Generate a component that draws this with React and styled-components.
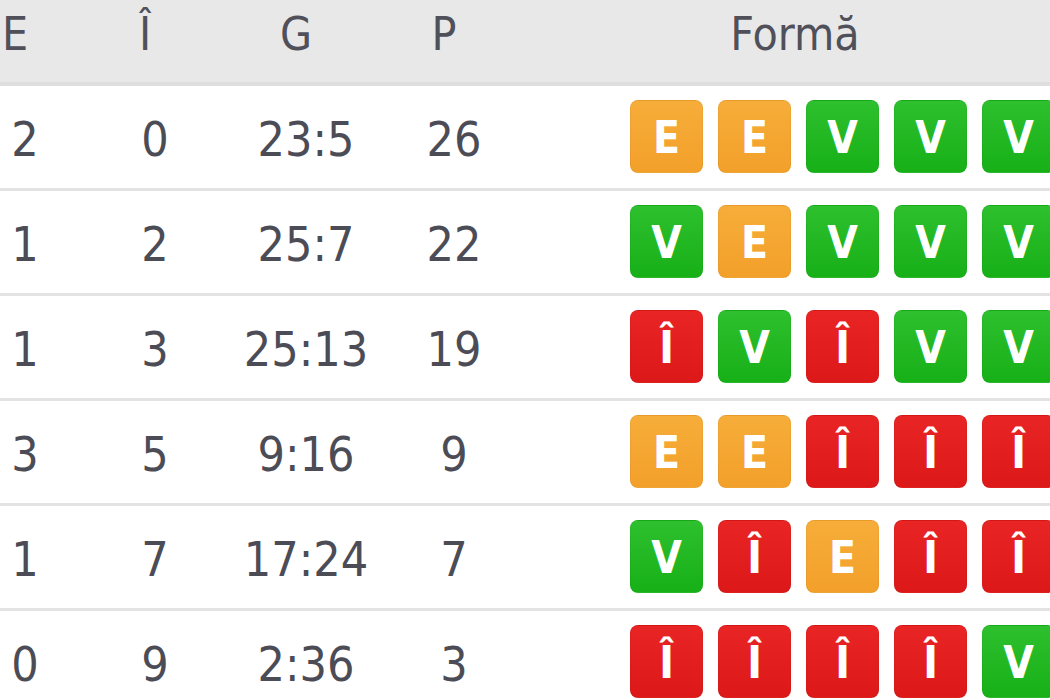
import React from "react";
import styled, { createGlobalStyle } from "styled-components";

const Global = createGlobalStyle`
  html, body { margin: 0; padding: 0; background: #fff; overflow: hidden; }
  body { font-family: "DejaVu Sans Condensed", "DejaVu Sans", Verdana, sans-serif; font-stretch: condensed; }
`;

const COLS = "90px 170px 132px 164px 538px";

const Table = styled.div`
  margin-left: -20px;
  width: 1094px;
  color: #4c4c56;
`;

const HeaderRow = styled.div`
  display: grid;
  grid-template-columns: ${COLS};
  height: 82px;
  background: #e8e8e8;
  border-bottom: 4px solid #dedede;
  box-sizing: content-box;
`;

const HeadCell = styled.div`
  display: flex;
  align-items: center;
  justify-content: center;
  padding-right: 20px;
  padding-bottom: 14px;
  font-size: 46px;
  color: #50505a;
`;

const Row = styled.div`
  display: grid;
  grid-template-columns: ${COLS};
  height: 102px;
  border-bottom: 3px solid #e3e3e3;
`;

const Cell = styled.div`
  display: flex;
  align-items: center;
  justify-content: center;
  font-size: 48px;
  padding-top: 4px;
`;

const FormCell = styled.div`
  display: flex;
  align-items: center;
  gap: 15px;
  padding-left: 94px;
  padding-bottom: 2px;
`;

const palette = {
  E: ["#f7ad3a", "#f2a02a"],
  V: ["#2ec02e", "#17b017"],
  "Î": ["#e82424", "#dc1818"],
};

const Badge = styled.div`
  width: 73px;
  height: 73px;
  flex: none;
  border-radius: 8px;
  box-sizing: border-box;
  border: 1px solid rgba(0, 0, 0, 0.04);
  background: linear-gradient(${(p) => palette[p.$r][0]}, ${(p) => palette[p.$r][1]});
  color: #fff;
  font-weight: bold;
  font-size: 44px;
  display: flex;
  align-items: center;
  justify-content: center;
  padding-top: 2px;
`;

const rows = [
  ["2", "0", "23:5", "26", "EEVVV"],
  ["1", "2", "25:7", "22", "VEVVV"],
  ["1", "3", "25:13", "19", "ÎVÎVV"],
  ["3", "5", "9:16", "9", "EEÎÎÎ"],
  ["1", "7", "17:24", "7", "VÎEÎÎ"],
  ["0", "9", "2:36", "3", "ÎÎÎÎV"],
];

export default function App() {
  return (
    <>
      <Global />
      <Table>
        <HeaderRow>
          <HeadCell>E</HeadCell>
          <HeadCell>Î</HeadCell>
          <HeadCell>G</HeadCell>
          <HeadCell>P</HeadCell>
          <HeadCell>Formă</HeadCell>
        </HeaderRow>
        {rows.map((r, i) => (
          <Row key={i}>
            <Cell>{r[0]}</Cell>
            <Cell>{r[1]}</Cell>
            <Cell>{r[2]}</Cell>
            <Cell>{r[3]}</Cell>
            <FormCell>
              {[...r[4]].map((c, j) => (
                <Badge key={j} $r={c}>{c}</Badge>
              ))}
            </FormCell>
          </Row>
        ))}
      </Table>
    </>
  );
}
